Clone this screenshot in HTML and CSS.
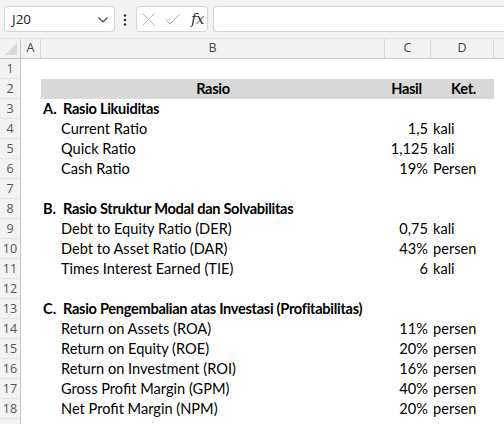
FILE: index.html
```html
<!DOCTYPE html>
<html>
<head>
<meta charset="utf-8">
<link rel="stylesheet" href="styles.css">
</head>
<body>
<div class="toolbar">
  <div class="namebox">
    <span class="ref">J20</span>
    <svg class="chev" width="10" height="6" viewBox="0 0 10 6"><path d="M0.5 0.5 L5 5 L9.5 0.5" fill="none" stroke="#444" stroke-width="1.1"/></svg>
  </div>
  <svg class="dots" width="4" height="12" viewBox="0 0 4 12"><circle cx="2" cy="1.5" r="1.3" fill="#333"/><circle cx="2" cy="6" r="1.3" fill="#333"/><circle cx="2" cy="10.5" r="1.3" fill="#333"/></svg>
  <div class="fxbox">
    <svg class="ico" width="13" height="13" viewBox="0 0 13 13"><path d="M0.5 0.5 L12.5 12.5 M12.5 0.5 L0.5 12.5" stroke="#b4b4b4" stroke-width="1"/></svg>
    <svg class="ico chk" width="15" height="11" viewBox="0 0 15 11"><path d="M0.5 5.5 L5 10 L14.5 0.5" fill="none" stroke="#b4b4b4" stroke-width="1"/></svg>
    <span class="fx">fx</span>
  </div>
  <div class="formula"></div>
</div>
<div class="colhead">
  <div class="corner"><span class="tri"></span></div>
  <div class="ch">A</div>
  <div class="ch">B</div>
  <div class="ch">C</div>
  <div class="ch">D</div>
  <div class="ch last"></div>
</div>
<div class="sheet">
  <div class="row"><div class="rh">1</div><div></div><div></div><div></div><div></div><div></div></div>
  <div class="row head"><div class="rh">2</div><div></div><div class="b hd">Rasio</div><div class="c hd">Hasil</div><div class="d hd">Ket.</div><div></div></div>
  <div class="row"><div class="rh">3</div><div></div><div class="b sec"><span class="let">A.</span>Rasio Likuiditas</div><div></div><div></div><div></div></div>
  <div class="row"><div class="rh">4</div><div></div><div class="b item">Current Ratio</div><div class="c">1,5</div><div class="d">kali</div><div></div></div>
  <div class="row"><div class="rh">5</div><div></div><div class="b item">Quick Ratio</div><div class="c">1,125</div><div class="d">kali</div><div></div></div>
  <div class="row"><div class="rh">6</div><div></div><div class="b item">Cash Ratio</div><div class="c">19%</div><div class="d">Persen</div><div></div></div>
  <div class="row"><div class="rh">7</div><div></div><div></div><div></div><div></div><div></div></div>
  <div class="row"><div class="rh">8</div><div></div><div class="b sec"><span class="let">B.</span>Rasio Struktur Modal dan Solvabilitas</div><div></div><div></div><div></div></div>
  <div class="row"><div class="rh">9</div><div></div><div class="b item">Debt to Equity Ratio (DER)</div><div class="c">0,75</div><div class="d">kali</div><div></div></div>
  <div class="row"><div class="rh">10</div><div></div><div class="b item">Debt to Asset Ratio (DAR)</div><div class="c">43%</div><div class="d">persen</div><div></div></div>
  <div class="row"><div class="rh">11</div><div></div><div class="b item">Times Interest Earned (TIE)</div><div class="c">6</div><div class="d">kali</div><div></div></div>
  <div class="row"><div class="rh">12</div><div></div><div></div><div></div><div></div><div></div></div>
  <div class="row"><div class="rh">13</div><div></div><div class="b sec"><span class="let">C.</span>Rasio Pengembalian atas Investasi (Profitabilitas)</div><div></div><div></div><div></div></div>
  <div class="row"><div class="rh">14</div><div></div><div class="b item">Return on Assets (ROA)</div><div class="c">11%</div><div class="d">persen</div><div></div></div>
  <div class="row"><div class="rh">15</div><div></div><div class="b item">Return on Equity (ROE)</div><div class="c">20%</div><div class="d">persen</div><div></div></div>
  <div class="row"><div class="rh">16</div><div></div><div class="b item">Return on Investment (ROI)</div><div class="c">16%</div><div class="d">persen</div><div></div></div>
  <div class="row"><div class="rh">17</div><div></div><div class="b item">Gross Profit Margin (GPM)</div><div class="c">40%</div><div class="d">persen</div><div></div></div>
  <div class="row"><div class="rh">18</div><div></div><div class="b item">Net Profit Margin (NPM)</div><div class="c">20%</div><div class="d">persen</div><div></div></div>
  <div class="row"><div class="rh"></div><div></div><div></div><div></div><div></div><div></div></div>
</div>
</body>
</html>
```

FILE: styles.css
```css
* { box-sizing: border-box; }
html, body { margin: 0; padding: 0; background: #ffffff; }
body { width: 504px; height: 424px; overflow: hidden; font-family: Lato, "Liberation Sans", sans-serif; }

.toolbar {
  height: 39px;
  background: #f3f3f3;
  display: flex;
  align-items: flex-start;
  padding: 6px 0 0 4px;
  border-bottom: 1px solid #e3e3e3;
}
.namebox {
  width: 111px;
  height: 26px;
  background: #fff;
  border: 1px solid #d4d4d4;
  border-radius: 4px;
  display: flex;
  align-items: center;
  justify-content: space-between;
  padding: 0 6px 0 7px;
}
.ref { font-family: "Open Sans", "Noto Sans", sans-serif; font-size: 13.5px; color: #222; }
.chev { margin-top: 1px; }
.dots { margin: 8px 9px 0 8px; }
.fxbox {
  width: 72px;
  height: 26px;
  background: #fff;
  border: 1px solid #d4d4d4;
  border-radius: 4px;
  display: flex;
  align-items: center;
  padding: 0 0 0 5px;
}
.ico { flex: none; }
.chk { margin-left: 10px; margin-top: 1px; }
.fx {
  font-family: "DejaVu Serif", "Liberation Serif", serif;
  font-style: italic;
  font-size: 15px;
  color: #333;
  margin-left: 11px;
  letter-spacing: -0.5px;
}
.formula {
  flex: 1;
  height: 26px;
  margin-left: 5px;
  background: #fff;
  border: 1px solid #d4d4d4;
  border-right: none;
  border-radius: 4px 0 0 4px;
}

.colhead {
  display: grid;
  grid-template-columns: 21px 20px 344px 46px 63px 1fr;
  height: 20px;
  background: #f3f3f3;
  border-bottom: 1px solid #c6c6c6;
  font-family: "Open Sans", "Noto Sans", sans-serif;
  font-size: 12.5px;
  color: #444;
}
.corner { position: relative; border-right: 1px solid #c6c6c6; }
.tri {
  position: absolute;
  right: 3px;
  bottom: 3px;
  width: 0;
  height: 0;
  border-left: 12px solid transparent;
  border-bottom: 12px solid #d8d8d8;
}
.ch {
  display: flex;
  align-items: center;
  justify-content: center;
  border-right: 1px solid #dadada;
  line-height: 1;
}
.ch.last { border-right: none; }

.row {
  display: grid;
  grid-template-columns: 21px 20px 344px 46px 63px 1fr;
  height: 20px;
  font-size: 14.6px;
  color: #000;
  line-height: 20px;
}
.rh {
  background: #f3f3f3;
  border-right: 1px solid #c6c6c6;
  border-bottom: 1px solid #e4e4e4;
  font-family: "Open Sans", "Noto Sans", sans-serif;
  font-size: 12.5px;
  color: #555;
  text-align: center;
  line-height: 19px;
}
.row > div { white-space: nowrap; overflow: visible; }
.head .hd { background: #d9d9d9; font-weight: 700; text-align: center; letter-spacing: -0.3px; }
.b.sec { font-weight: 700; padding-left: 2px; letter-spacing: -0.3px; }
.let { display: inline-block; width: 20px; letter-spacing: 0; }
.b.item { padding-left: 20px; }
.c { text-align: right; padding-right: 3px; }
.d { padding-left: 2px; }
```
